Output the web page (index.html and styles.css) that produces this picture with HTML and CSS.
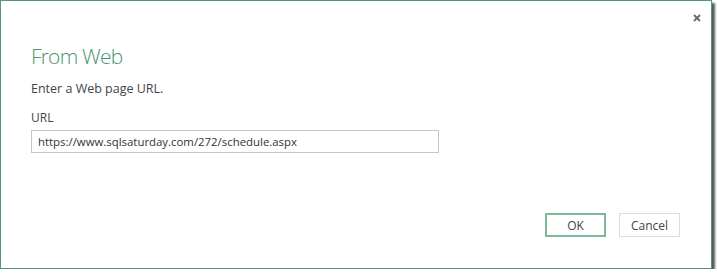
FILE: index.html
```html
<!DOCTYPE html>
<html lang="en">

<head>
  <meta charset="UTF-8" />
  <title>From Web</title>
  <link rel="stylesheet" href="styles.css">
</head>

<body>
  <div class="dialog">
    <div class="topbar">
      <button class="close" title="Close">
        <svg width="8" height="8" viewBox="0 0 8 8">
          <path d="M1 1 L7 7 M7 1 L1 7" stroke="#6b6b6b" stroke-width="1.9" />
        </svg>
      </button>
    </div>
    <div class="content">
      <h1 class="title">From Web</h1>
      <p class="prompt">Enter a Web page URL.</p>
      <label class="label" for="url">URL</label>
      <input class="url" id="url" type="text" value="https://www.sqlsaturday.com/272/schedule.aspx">
    </div>
    <div class="actions">
      <button class="btn ok">OK</button>
      <button class="btn">Cancel</button>
    </div>
  </div>
</body>

</html>
```

FILE: styles.css
```css
* {
  box-sizing: border-box;
}

body {
  margin: 0;
  background: #fff;
  font-family: "Open Sans", "Noto Sans", Arial, sans-serif;
}

.dialog {
  width: 712px;
  height: 269px;
  border: 1px solid #4f9a72;
  background: #fff;
  box-shadow: 3px 3px 2px rgba(0, 0, 0, 0.65);
  display: flex;
  flex-direction: column;
}

.topbar {
  display: flex;
  justify-content: flex-end;
  padding: 11px 9px 0 0;
  height: 30px;
}

.close {
  border: none;
  background: none;
  padding: 0;
  width: 11px;
  height: 11px;
  display: flex;
  align-items: center;
  justify-content: center;
}

.content {
  padding: 0 0 0 30px;
  flex: 1;
}

.title {
  margin: 11px 0 0;
  font-size: 21px;
  font-weight: 300;
  letter-spacing: -0.8px;
  color: #4a9470;
  line-height: 28px;
}

.prompt {
  margin: 10px 0 0;
  font-size: 12.5px;
  color: #444;
  line-height: 18px;
}

.label {
  display: block;
  margin-top: 12px;
  font-size: 12px;
  color: #444;
  line-height: 16px;
}

.url {
  display: block;
  margin-top: 4px;
  width: 408px;
  height: 23px;
  border: 1px solid #c6c6c6;
  padding: 0 6px;
  font-family: inherit;
  font-size: 11.4px;
  color: #333;
  outline: none;
}

.actions {
  display: flex;
  justify-content: flex-end;
  gap: 13px;
  padding: 0 31px 31px 0;
}

.btn {
  width: 61px;
  height: 24px;
  background: #fff;
  border: 1px solid #dcdcdc;
  font-family: inherit;
  font-size: 12px;
  color: #444;
  padding: 0;
}

.btn.ok {
  border: 2px solid #7fb79a;
}
```
